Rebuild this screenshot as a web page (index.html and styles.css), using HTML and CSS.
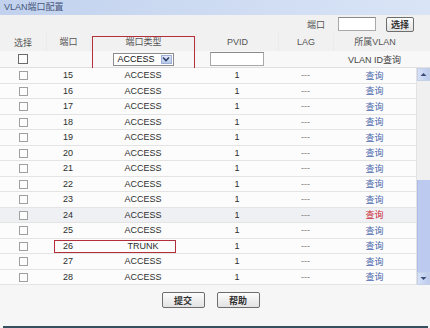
FILE: index.html
```html
<!DOCTYPE html>
<html>
<head>
    <meta charset="utf-8">
    <title>VLAN端口配置</title>
    <link rel="stylesheet" href="styles.css">
</head>
<body>
<div class="panel">
    <div class="title">VLAN端口配置</div>

    <div class="toolbar">
        <span class="label">端口</span>
        <span class="textbox port-box"></span>
        <span class="btn btn-pick">选择</span>
    </div>

    <div class="head-wrap">
        <div class="grid head">
            <div>选择</div>
            <div>端口</div>
            <div>端口类型</div>
            <div>PVID</div>
            <div>LAG</div>
            <div>所属VLAN</div>
        </div>
        <div class="grid filter">
            <div><span class="check check-dark"></span></div>
            <div></div>
            <div>
                <span class="select">
                    <span class="select-text">ACCESS</span>
                    <span class="select-arrow">
                        <svg width="8" height="6" viewBox="0 0 8 6"><path d="M1 1.5 L4 4.5 L7 1.5" fill="none" stroke="#2c3e6a" stroke-width="1.6"/></svg>
                    </span>
                </span>
            </div>
            <div><span class="textbox pvid-box"></span></div>
            <div></div>
            <div class="vlan-query">VLAN ID查询</div>
        </div>
        <span class="mark mark-type"></span>
    </div>

    <div class="body">
        <div class="rows" id="rows"></div>
        <div class="scrollbar">
            <div class="sb-btn">
                <svg width="7" height="5" viewBox="0 0 7 5"><path d="M0.5 4 L3.5 1 L6.5 4 Z" fill="#3a4c78"/></svg>
            </div>
            <div class="sb-track"><div class="sb-thumb"></div></div>
            <div class="sb-btn">
                <svg width="7" height="5" viewBox="0 0 7 5"><path d="M0.5 1 L3.5 4 L6.5 1 Z" fill="#3a4c78"/></svg>
            </div>
        </div>
    </div>

    <div class="actions">
        <span class="btn btn-big">提交</span>
        <span class="btn btn-big">帮助</span>
    </div>
    <div class="footline"></div>
</div>

<script>
    // ports 15..28 visible in the list
    const rows = document.getElementById('rows');
    for (let port = 15; port <= 28; port++) {
        const row = document.createElement('div');
        row.className = 'grid row';
        if (port === 24) row.className += ' row-hover';
        const type = port === 26 ? 'TRUNK' : 'ACCESS';
        row.innerHTML =
            '<div><span class="check"></span></div>' +
            '<div>' + port + '</div>' +
            '<div>' + type + '</div>' +
            '<div>1</div>' +
            '<div class="lag">---</div>' +
            '<div class="query">查询</div>';
        if (port === 26) {
            const mark = document.createElement('span');
            mark.className = 'mark mark-row';
            row.appendChild(mark);
        }
        rows.appendChild(row);
    }
</script>
</body>
</html>
```

FILE: styles.css
```css
body {
    margin: 0;
    padding: 0;
    background-color: #fff;
    font-family: "Liberation Sans", "Noto Sans CJK SC", sans-serif;
    font-size: 9px;
    color: #333;
}
.panel {
    width: 430px;
    height: 328px;
    background-color: #f6f6f6;
}
.title {
    height: 15px;
    line-height: 15px;
    padding-left: 4px;
    color: #44567c;
    background: linear-gradient(to right, #c2d2ee, #d9e4f6);
}
.toolbar {
    height: 18px;
    display: flex;
    align-items: center;
    justify-content: flex-end;
    padding-right: 16px;
    background-color: #f1f1f1;
    color: #555;
}
.label {
    margin-right: 13px;
}
.textbox {
    display: inline-block;
    box-sizing: border-box;
    background-color: #fff;
    border: 1px solid #a8a8a8;
    border-top-color: #8a8a8a;
}
.port-box {
    width: 38px;
    height: 14px;
    margin-right: 10px;
}
.btn {
    display: inline-flex;
    align-items: center;
    justify-content: center;
    box-sizing: border-box;
    border: 1px solid #6d6d6d;
    border-radius: 2px;
    background: linear-gradient(#fdfdfd, #e2e2e2);
    color: #333;
    font-weight: bold;
}
.btn-pick {
    width: 28px;
    height: 15px;
}
.head-wrap {
    position: relative;
}
.grid {
    display: grid;
    grid-template-columns: 46px 44px 106px 82px 55px 83px;
    align-items: center;
    text-align: center;
}
.head {
    height: 18px;
    background-color: #f1f1f1;
    color: #555;
}
.head > div + div {
    border-left: 1px solid #ebebeb;
    line-height: 18px;
}
.filter {
    height: 17px;
    background-color: #f8f8f8;
    border-bottom: 1px solid #e0e0e0;
    box-sizing: border-box;
}
.filter > div {
    display: flex;
    justify-content: center;
    align-items: center;
}
.check {
    display: inline-block;
    width: 9px;
    height: 9px;
    box-sizing: border-box;
    border: 1px solid #a0a0a0;
    background-color: #fdfdfd;
    vertical-align: middle;
}
.check-dark {
    border-color: #6a6a6a;
    width: 10px;
    height: 10px;
}
.select {
    display: inline-flex;
    align-items: center;
    box-sizing: border-box;
    width: 61px;
    height: 13px;
    border: 1px solid #8c8c8c;
    background-color: #fff;
    color: #111;
}
.select-text {
    flex: 1;
    padding-left: 4px;
    text-align: left;
}
.select-arrow {
    width: 11px;
    height: 9px;
    margin-right: 1px;
    display: flex;
    align-items: center;
    justify-content: center;
    background: linear-gradient(#dfe8f8, #b9c9ea);
    border: 1px solid #9fb0d6;
    box-sizing: border-box;
}
.pvid-box {
    width: 54px;
    height: 14px;
}
.vlan-query {
    color: #444;
}
.mark {
    position: absolute;
    box-sizing: border-box;
    border: 1.5px solid #b3303a;
    pointer-events: none;
}
.mark-type {
    left: 92px;
    top: 3px;
    width: 103px;
    height: 34px;
}
.body {
    display: flex;
}
.rows {
    width: 416px;
}
.row {
    position: relative;
    height: 15.5px;
    box-sizing: border-box;
    border-bottom: 1px solid #e4e4e4;
    background-color: #fcfcfc;
    color: #2e2e2e;
}
.row-hover {
    background-color: #eef0f4;
}
.lag {
    color: #777;
}
.query {
    color: #4a68ac;
}
.row-hover .query {
    color: #cc2a3a;
}
.mark-row {
    left: 54px;
    top: 1px;
    width: 122px;
    height: 13px;
}
.scrollbar {
    width: 13px;
    display: flex;
    flex-direction: column;
    background-color: #f0f0f0;
    border-left: 1px solid #e2e2e2;
}
.sb-btn {
    height: 13px;
    display: flex;
    align-items: center;
    justify-content: center;
    background: linear-gradient(to right, #d6e0f6, #bccbec);
    box-sizing: border-box;
    border: 1px solid #c4cfe8;
}
.sb-track {
    flex: 1;
    display: flex;
    flex-direction: column;
    justify-content: flex-end;
}
.sb-thumb {
    height: 92px;
    background-color: #bccaf0;
    border-left: 1px solid #aebde6;
}
.actions {
    height: 41px;
    box-sizing: border-box;
    padding-top: 7px;
    padding-right: 9px;
    display: flex;
    justify-content: center;
    align-items: flex-start;
    gap: 12px;
}
.btn-big {
    width: 43px;
    height: 16px;
}
.footline {
    margin: 0 2px 0 3px;
    height: 2px;
    background-color: #34505e;
}
```
